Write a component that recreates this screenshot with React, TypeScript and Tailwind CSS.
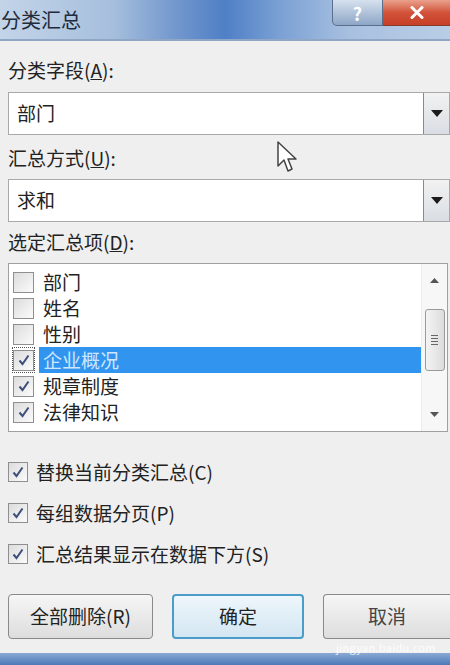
import React from "react";

const FONT = "font-['Microsoft_YaHei','Noto_Sans_CJK_SC',sans-serif]";

function Check({ checked, small }: { checked: boolean; small?: boolean }) {
  return (
    <span
      className={`flex shrink-0 items-center justify-center border border-[#8f8f8f] bg-gradient-to-br from-[#dcdcdc] to-[#fbfbfb] ${
        small ? "h-[20px] w-[20px]" : "h-[21px] w-[21px]"
      }`}
    >
      {checked && (
        <svg width="14" height="14" viewBox="0 0 14 14">
          <path d="M2.5 7.5 L5.5 11 L11.5 2.5" fill="none" stroke="#3d4f7a" strokeWidth="2" />
        </svg>
      )}
    </span>
  );
}

function Combo({ value }: { value: string }) {
  return (
    <div className="flex h-[43px] w-full border border-[#a9a9a9] bg-white">
      <div className="flex flex-1 items-center pl-[8px] text-[19px] text-[#222]">{value}</div>
      <div className="flex w-[26px] items-center justify-center border-l border-[#8a8a8a] bg-gradient-to-b from-[#f2f2f2] to-[#d9dde3]">
        <svg width="12" height="7" viewBox="0 0 12 7">
          <path d="M0 0 H12 L6 7 Z" fill="#1a1a1a" />
        </svg>
      </div>
    </div>
  );
}

const items = [
  { label: "部门", checked: false },
  { label: "姓名", checked: false },
  { label: "性别", checked: false },
  { label: "企业概况", checked: true, selected: true },
  { label: "规章制度", checked: true },
  { label: "法律知识", checked: true },
];

const options = ["替换当前分类汇总(C)", "每组数据分页(P)", "汇总结果显示在数据下方(S)"];

export default function App() {
  return (
    <div className={`relative flex h-[665px] w-[450px] flex-col overflow-hidden bg-[#efefef] ${FONT}`}>
      {/* title bar */}
      <div className="flex h-[41px] shrink-0 items-start border-b-2 border-[#8fa6c4] bg-[linear-gradient(90deg,#c3d4e8_0%,#a6bfdd_25%,#6f95cc_40%,#4f7fc6_50%,#7aa0d4_62%,#a9c1e0_78%,#b9cde5_100%)]">
        <div className="pl-[1px] pt-[7px] text-[20px] leading-[26px] text-[#1e2b3c]">分类汇总</div>
        <div className="ml-auto flex h-[26px]">
          <div className="flex w-[51px] items-center justify-center rounded-bl-[5px] border border-t-0 border-[#5a6f8d] bg-gradient-to-b from-[#d6e1ee] to-[#8ea6c6] text-[18px] font-bold leading-none text-white">
            ?
          </div>
          <div className="flex w-[67px] items-center justify-center border-b border-[#8a3a2a] bg-gradient-to-b from-[#e9a08c] via-[#d2533a] to-[#c63f26]">
            <svg width="14" height="13" viewBox="0 0 14 13">
              <path d="M2 1.5 L12 11.5 M12 1.5 L2 11.5" stroke="#fff" strokeWidth="3" strokeLinecap="round" />
            </svg>
          </div>
        </div>
      </div>

      {/* body */}
      <div className="flex flex-1 flex-col pl-[8px] text-[#222]">
        <div className="mt-[17px] text-[19px] leading-[24px]">分类字段(<span className="underline">A</span>):</div>
        <div className="mt-[10px]">
          <Combo value="部门" />
        </div>
        <div className="relative mt-[11px] text-[19px] leading-[24px]">
          汇总方式(<span className="underline">U</span>):
          <svg className="absolute left-[269px] top-[-5px]" width="22" height="34" viewBox="0 0 22 34">
            <path d="M1 1 V25 L7 19 L11 30 L15 28 L11 18 L19 18 Z" fill="#fff" stroke="#444" strokeWidth="1.5" strokeLinejoin="round" />
          </svg>
        </div>
        <div className="mt-[9px]">
          <Combo value="求和" />
        </div>
        <div className="mt-[8px] text-[19px] leading-[24px]">选定汇总项(<span className="underline">D</span>):</div>

        {/* list box */}
        <div className="mt-[9px] mr-[2px] flex h-[169px] border border-[#a0a0a0] bg-white">
          <div className="flex flex-1 flex-col pt-[5px]">
            {items.map((it) => (
              <div key={it.label} className="flex h-[26px] items-center">
                <div
                  className={`ml-[3px] flex h-[26px] items-center px-[1px] ${
                    it.selected ? "outline-1 outline-dotted outline-[#555] -outline-offset-1" : ""
                  }`}
                >
                  <Check checked={it.checked} />
                </div>
                <div
                  className={`ml-[4px] flex h-[26px] flex-1 items-center pl-[4px] text-[19px] ${
                    it.selected ? "bg-[#3194ef] text-[#cfe6ff]" : ""
                  }`}
                >
                  {it.label}
                </div>
              </div>
            ))}
          </div>
          <div className="flex w-[26px] flex-col items-center border-l border-[#ececec] bg-[#f7f7f7]">
            <svg className="mt-[14px]" width="9" height="5" viewBox="0 0 9 5">
              <path d="M0 5 L4.5 0 L9 5 Z" fill="#555" />
            </svg>
            <div className="mt-[26px] flex h-[62px] w-[20px] flex-col items-center justify-center gap-[2px] rounded-[3px] border border-[#9a9a9a] bg-gradient-to-r from-[#f4f4f4] to-[#dcdcdc]">
              <span className="h-[1px] w-[7px] bg-[#666]" />
              <span className="h-[1px] w-[7px] bg-[#666]" />
              <span className="h-[1px] w-[7px] bg-[#666]" />
              <span className="h-[1px] w-[7px] bg-[#666]" />
            </div>
            <svg className="mt-auto mb-[14px]" width="9" height="5" viewBox="0 0 9 5">
              <path d="M0 0 L4.5 5 L9 0 Z" fill="#555" />
            </svg>
          </div>
        </div>

        {/* options */}
        <div className="mt-[29px] flex flex-col gap-[19px]">
          {options.map((o) => (
            <div key={o} className="flex h-[22px] items-center gap-[8px] text-[19px]">
              <Check checked small />
              <span>{o}</span>
            </div>
          ))}
        </div>

        {/* buttons */}
        <div className="mt-[29px] flex gap-[19px]">
          <div className="flex h-[45px] w-[145px] items-center justify-center rounded-[4px] border border-[#8a8a8a] bg-gradient-to-b from-[#f6f6f6] to-[#dddddd] text-[19px]">
            全部删除(R)
          </div>
          <div className="flex h-[45px] w-[132px] items-center justify-center rounded-[4px] border-2 border-[#4b9cc8] bg-gradient-to-b from-[#eef6fb] to-[#d3e6f2] text-[19px]">
            确定
          </div>
          <div className="relative flex h-[45px] flex-1 items-center justify-center rounded-l-[4px] border border-r-0 border-[#8a8a8a] bg-gradient-to-b from-[#f6f6f6] to-[#dddddd] text-[19px]">
            <span className="text-[#444]">取消</span>
            <span className="absolute bottom-[-17px] left-[12px] text-[11px] tracking-wide text-white/80">jingyan.baidu.com</span>
          </div>
        </div>
      </div>

      <div className="h-[12px] shrink-0 bg-gradient-to-b from-[#8aa9d4] to-[#4d79b8]" />
    </div>
  );
}
